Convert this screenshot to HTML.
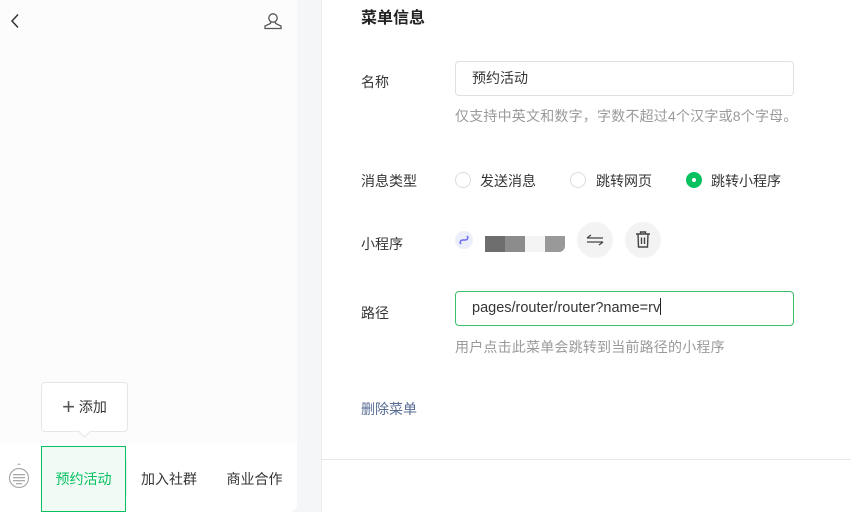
<!DOCTYPE html>
<html><head><meta charset="utf-8"><style>
*{margin:0;padding:0;box-sizing:border-box}
body{width:851px;height:512px;overflow:hidden;background:#f5f6f7;font-family:"Liberation Sans","Noto Sans CJK SC",sans-serif;color:#353535;position:relative;font-size:14px}
.a{position:absolute}
.phone{left:0;top:0;width:297px;height:512px;background:#fcfcfc;border-bottom-right-radius:8px;overflow:hidden}
.bar{left:0;top:444px;width:297px;height:68px;background:#fff}
.right{left:321px;top:0;width:530px;height:512px;background:#fff;border-left:1px solid #ececec}
.lbl{font-size:14px;color:#353535}
.input{border:1px solid #e0e0e0;border-radius:4px;height:35px;width:339px;left:455px;font-size:14px;padding-left:16px;line-height:33px}
.tip{font-size:14px;color:#9a9a9a;letter-spacing:0.2px}
.radio{width:16px;height:16px;border-radius:50%;border:1px solid #dcdcdc;background:#fff}
.cb{width:36px;height:36px;border-radius:50%;background:#f3f3f3}
</style></head><body>
<div class="a phone">
  <svg class="a" style="left:9px;top:13px" width="12" height="16" viewBox="0 0 12 16"><path d="M9 1.5 L3 8 L9 14.5" fill="none" stroke="#333" stroke-width="1.5"/></svg>
  <svg class="a" style="left:263px;top:11px" width="20" height="20" viewBox="0 0 20 20"><circle cx="10" cy="7" r="4.2" fill="none" stroke="#555" stroke-width="1.3"/><path d="M7.5 11 L7.5 12.5 L2 15 L2 17.5 L18 17.5 L18 15 L12.5 12.5 L12.5 11" fill="none" stroke="#555" stroke-width="1.3"/></svg>
  <div class="a bar"></div>
  <div class="a" style="left:41px;top:382px;width:87px;height:50px;background:#fff;border:1px solid #e6e6e6;border-radius:4px;font-size:14px;color:#353535;line-height:48px;text-align:center"><span style="font-size:22px;color:#555;vertical-align:-2px">+</span> 添加</div>
  <div class="a" style="left:80px;top:427px;width:9px;height:9px;background:#fff;border-right:1px solid #e6e6e6;border-bottom:1px solid #e6e6e6;transform:rotate(45deg)"></div>
  <svg class="a" style="left:8px;top:461px" width="22" height="30" viewBox="0 0 22 30"><path d="M11 2 L9 4 L13 4 Z" fill="#bbb"/><circle cx="11" cy="17" r="9.5" fill="none" stroke="#aaa" stroke-width="1.2"/><g fill="#aaa"><rect x="5" y="13" width="12" height="1.3"/><rect x="5" y="16" width="12" height="1.3"/><rect x="5" y="19" width="12" height="1.3"/><rect x="8" y="22" width="6" height="1.3"/></g></svg>
  <div class="a" style="left:41px;top:446px;width:85px;height:66px;border:1px solid #07c160;background:#f2faf5;color:#07c160;text-align:center;line-height:64px;font-size:14px">预约活动</div>
  <div class="a" style="left:126px;top:460px;width:1px;height:36px;background:#eee"></div>
  <div class="a" style="left:126px;top:446px;width:86px;line-height:66px;text-align:center;font-size:14px">加入社群</div>
  <div class="a" style="left:212px;top:446px;width:85px;line-height:66px;text-align:center;font-size:14px">商业合作</div>
</div>
<div class="a right">
  <div class="a" style="left:0;top:459px;width:530px;height:1px;background:#e7e7e7"></div>
</div>
<div class="a" style="left:361px;top:4px;font-size:16px;font-weight:bold;color:#222">菜单信息</div>
<div class="a lbl" style="left:361px;top:72px">名称</div>
<div class="a input" style="top:61px">预约活动</div>
<div class="a tip" style="left:455px;top:106px">仅支持中英文和数字，字数不超过4个汉字或8个字母。</div>
<div class="a lbl" style="left:361px;top:171px">消息类型</div>
<div class="a radio" style="left:455px;top:172px"></div><div class="a lbl" style="left:480px;top:171px">发送消息</div>
<div class="a radio" style="left:570px;top:172px"></div><div class="a lbl" style="left:596px;top:171px">跳转网页</div>
<div class="a radio" style="left:686px;top:172px;background:#07c160;border-color:#07c160"><div class="a" style="left:5px;top:5px;width:4px;height:4px;border-radius:50%;background:#fff"></div></div><div class="a lbl" style="left:711px;top:171px">跳转小程序</div>
<div class="a lbl" style="left:361px;top:234px">小程序</div>
<div class="a" style="left:455px;top:231px;width:18px;height:18px;border-radius:50%;background:#eceefb"></div>
<svg class="a" style="left:457px;top:233px" width="14" height="14" viewBox="0 0 14 14"><path d="M4 11 C2 9 4 7 6 7 L8 7 C10 7 12 5 10 3" fill="none" stroke="#6b6ff0" stroke-width="1.5"/></svg>
<div class="a" style="left:485px;top:236px;width:20px;height:16px;background:#6e6e6e"></div>
<div class="a" style="left:505px;top:236px;width:20px;height:16px;background:#8c8c8c"></div>
<div class="a" style="left:525px;top:236px;width:20px;height:16px;background:#f4f4f4"></div>
<div class="a" style="left:545px;top:236px;width:20px;height:16px;background:#999;border-bottom-right-radius:6px"></div>
<div class="a cb" style="left:577px;top:222px"></div>
<svg class="a" style="left:585px;top:231px" width="20" height="18" viewBox="0 0 20 18"><path d="M2 7 H18 M2 7 L6 4 M18 11 H2 M18 11 L14 14" fill="none" stroke="#444" stroke-width="1.3"/></svg>
<div class="a cb" style="left:625px;top:222px"></div>
<svg class="a" style="left:634px;top:230px" width="18" height="20" viewBox="0 0 18 20"><path d="M2 4 H16 M6.5 4 V2 H11.5 V4 M4 4 L4.5 17 H13.5 L14 4 M7.5 7.5 V14 M10.5 7.5 V14" fill="none" stroke="#444" stroke-width="1.4"/></svg>
<div class="a lbl" style="left:361px;top:303px">路径</div>
<div class="a input" style="top:291px;border-color:#3cc06a;font-size:14.5px">pages/router/router?name=rv<span style="display:inline-block;width:1px;height:17px;background:#222;vertical-align:-3px"></span></div>
<div class="a tip" style="left:455px;top:337px">用户点击此菜单会跳转到当前路径的小程序</div>
<div class="a" style="left:361px;top:399px;font-size:14px;color:#576b95">删除菜单</div>
</body></html>
